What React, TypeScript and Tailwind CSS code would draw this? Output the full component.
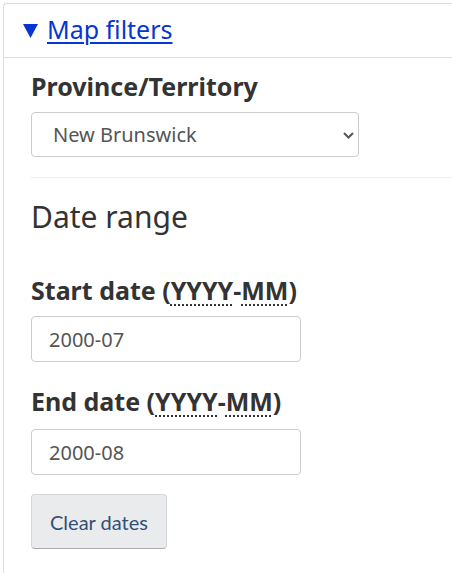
import React from 'react';

const labelCls = 'block font-bold text-[25px] leading-[26px] text-[#333]';
const inputCls =
  'block w-[270px] h-[46px] border border-[#ccc] rounded-[4px] pl-[17px] text-[20px] text-[#555] outline-none';

const Abbr: React.FC<{ children: React.ReactNode }> = ({ children }) => (
  <abbr className="underline decoration-dotted decoration-[2px] underline-offset-[4px] decoration-[#333]">
    {children}
  </abbr>
);

export default function App() {
  return (
    <div className="bg-white min-h-[573px] pt-[3px] pl-[3px] font-['Noto_Sans',sans-serif] text-[#333] overflow-hidden">
      <div className="border border-[#ddd] rounded-tl-[4px] border-r-0 border-b-0 w-[470px] min-h-[580px]">
        <div className="flex h-[54px] pl-[19px] pt-[12px] border-b border-[#ddd]">
          <svg className="mt-[8px] mr-[9px]" width="15" height="14" viewBox="0 0 15 14">
            <path d="M0 0 H15 L7.5 14 Z" fill="#0535d2" />
          </svg>
          <a
            href="#"
            className="text-[#0535d2] text-[25px] leading-[26px] underline underline-offset-[3px] decoration-[2px]"
          >
            Map filters
          </a>
        </div>
        <div className="pl-[27px] pt-[15px]">
          <label className={labelCls + ' mb-[13px]'}>Province/Territory</label>
          <div className="relative w-[328px]">
            <select
              defaultValue="nb"
              className="appearance-none block w-full h-[45px] border border-[#ccc] rounded-[4px] bg-white pl-[21px] text-[20px] text-[#555] outline-none"
            >
              <option value="nb">New Brunswick</option>
            </select>
            <svg className="absolute right-[5px] top-[20px] pointer-events-none" width="11" height="7" viewBox="0 0 11 7">
              <path d="M1 1 L5.5 5.5 L10 1" fill="none" stroke="#555" strokeWidth="2" />
            </svg>
          </div>
          <hr className="border-0 border-t border-[#eee] mt-[20px] mb-0" />
          <h2 className="text-[30px] font-normal leading-[33px] mt-[22px] mb-[44px]">Date range</h2>
          <label className={labelCls + ' mb-[13px]'}>
            Start date (<Abbr>YYYY</Abbr>-<Abbr>MM</Abbr>)
          </label>
          <input defaultValue="2000-07" className={inputCls} />
          <label className={labelCls + ' mt-[26px] mb-[15px]'}>
            End date (<Abbr>YYYY</Abbr>-<Abbr>MM</Abbr>)
          </label>
          <input defaultValue="2000-08" className={inputCls} />
          <button className="block mt-[19px] h-[55px] px-[18px] bg-[#eaebed] border border-[#d4d6da] border-b-[#a9abae] rounded-[4px] font-['Lato',sans-serif] text-[20px] text-[#335075]">
            Clear dates
          </button>
        </div>
      </div>
    </div>
  );
}
